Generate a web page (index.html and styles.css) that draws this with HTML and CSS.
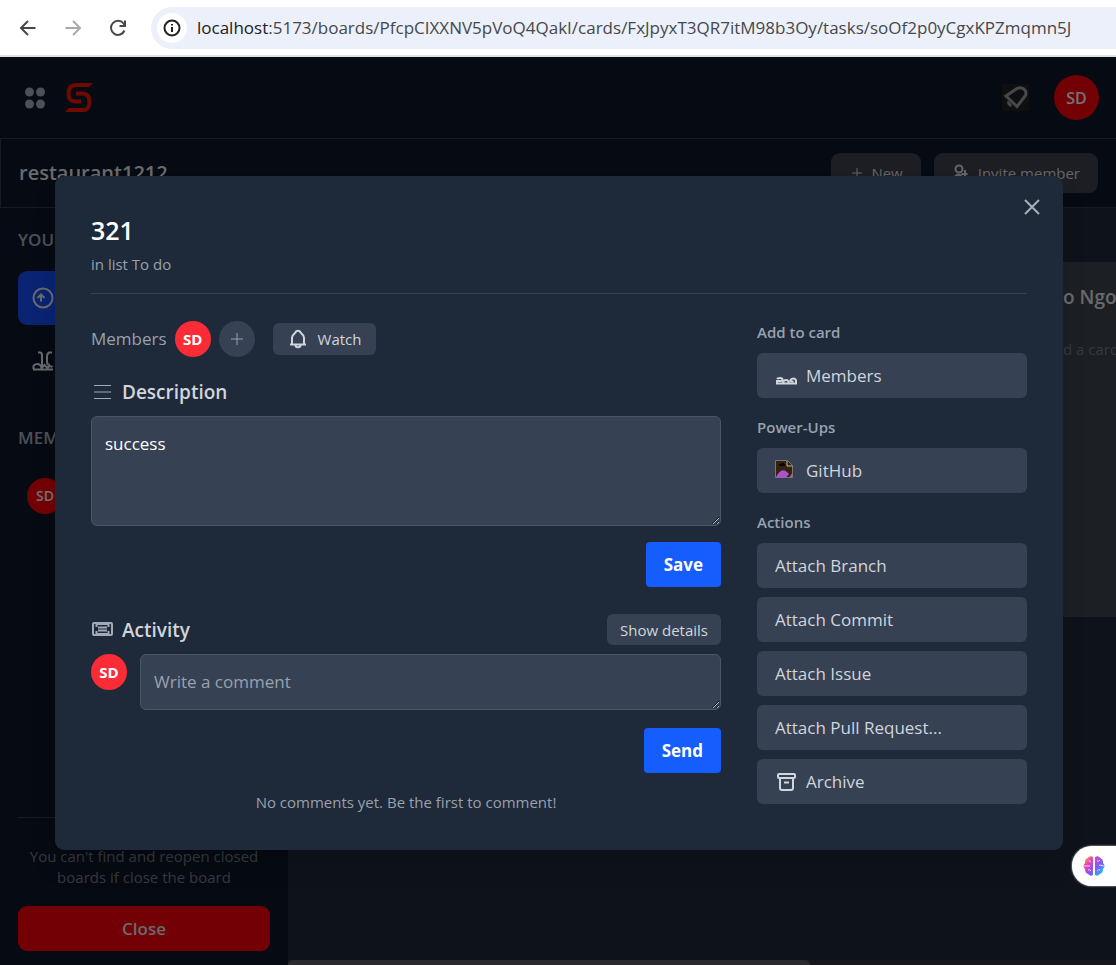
FILE: index.html
```html
<!DOCTYPE html>
<html lang="en">
<head>
<meta charset="utf-8">
<title>restaurant1212</title>
<link rel="stylesheet" href="styles.css">
</head>
<body>
<div class="browser">
  <button class="nav" aria-label="Back"><svg width="24" height="24" viewBox="0 0 24 24"><path d="M19.500 12H5M12 5l-7 7 7 7"/></svg></button>
  <button class="nav off" aria-label="Forward"><svg width="24" height="24" viewBox="0 0 24 24"><path d="M4.500 12H19M12 5l7 7-7 7"/></svg></button>
  <button class="nav" aria-label="Reload"><svg width="24" height="24" viewBox="0 0 24 24"><path d="M18.500 14.500A7 7 0 1 1 17.500 7.500L19 9.500M19 4.500v5.500h-5.500"/></svg></button>
  <div class="address">
    <span class="info"><svg width="24" height="24" viewBox="0 0 24 24"><circle cx="12" cy="12" r="7.500"/><path d="M12 11v5M12 8v1.500"/></svg></span>
    <span class="url"><span class="host">localhost</span>:5173/boards/PfcpCIXXNV5pVoQ4QakI/cards/FxJpyxT3QR7itM98b3Oy/tasks/soOf2p0yCgxKPZmqmn5J</span>
  </div>
</div>
<div class="app">
  <header class="top">
    <svg class="dots" width="20" height="22" viewBox="0 0 20 22"><circle cx="4.500" cy="5" r="4.500"/><circle cx="15.500" cy="5" r="4.500"/><circle cx="4.500" cy="17" r="4.500"/><circle cx="15.500" cy="17" r="4.500"/></svg>
    <svg class="logo" width="28" height="29" viewBox="0 0 28 29"><path d="M28 2H11Q3.500 2 3.500 10.500T11 18.500H16M11 10.500H17.500Q24.500 10.500 24.500 19T17 27H0"/></svg>
    <span class="bell"><svg width="27" height="27" viewBox="0 0 27 27"><path d="M15 4.500C20 2 25.500 6 23.500 11.500L15 22.500 4 12 15 4.500M7 17.500c-1 2 .5 3.500 2.500 4"/></svg></span>
    <span class="avatar big">SD</span>
  </header>
  <div class="boardbar">
    <h1>restaurant1212</h1>
    <button class="dim"><svg width="14" height="14" viewBox="0 0 14 14"><path d="M7 2v10M2 7h10"/></svg>New</button>
    <button class="dim invite"><svg width="16" height="18" viewBox="0 0 16 18"><circle cx="6" cy="5" r="3.500"/><path d="M1.500 16c0-6 5-6 7-4M12 6v8M8.500 10h6"/></svg>Invite member</button>
  </div>
  <div class="main">
    <aside>
      <h3>YOUR</h3>
      <button class="item active" aria-label="Boards"><svg width="22" height="22" viewBox="0 0 22 22"><circle cx="11" cy="11" r="9.500"/><path d="M9 14.500V8M5.500 11 9 7.500 12.500 11"/></svg></button>
      <button class="item" aria-label="Members"><svg width="22" height="22" viewBox="0 0 22 22"><path d="M6 2.500h2q2 0 2 3V16M20 2.500h-3q-2 1-2 4V12q0 3 3 3M1.500 19v-3q1-2 4-2t4 4l3-3 3 3q2-3 5-1M1 19.500h20"/></svg></button>
      <h3 class="second">MEM</h3>
      <span class="avatar side">SD</span>
      <footer><p>You can't find and reopen closed boards if close the board</p><button>Close</button></footer>
    </aside>
    <section class="canvas">
      <article class="column"><h4>o Ngo</h4><p>d a card</p></article>
      <div class="scroll"><div></div></div>
    </section>
  </div>
  <div class="overlay">
    <div class="modal" role="dialog" aria-labelledby="title">
      <button class="x" aria-label="Close card"><svg width="18" height="18" viewBox="0 0 18 18"><path d="M2 2l14 14M16 2 2 16"/></svg></button>
      <div class="head"><h2 id="title">321</h2><p>in list To do</p></div>
      <div class="cols">
        <div class="left">
          <div class="members"><span>Members</span><span class="avatar">SD</span><button class="plus" aria-label="Add member"><svg width="14" height="14" viewBox="0 0 14 14"><path d="M7 1v12M1 7h12"/></svg></button>
            <button class="watch"><svg width="20" height="20" viewBox="0 0 20 20"><path d="M2 15.500h16M4 15V8.500C4 6 6.500 4.500 7.500 3.500 8 1 12 1 12.500 3.500 13.500 4.500 16 6 16 8.500V15M7.500 16c0 3 5 3 5 0"/></svg>Watch</button></div>
          <label class="title" for="desc"><svg width="22" height="18" viewBox="0 0 22 18"><path d="M3 2.500h17M3 9h17M3 15.500h17"/></svg>Description</label>
          <textarea id="desc" class="desc">success</textarea>
          <button class="primary">Save</button>
          <div class="activity"><label class="title" for="comment"><svg width="22" height="18" viewBox="0 0 22 18"><rect x="2" y="2" width="19" height="12" rx="1"/><path d="M5 3h13M5 13h13M7 6.500h9M7 9.500h9M5.500 3v3M17.500 3v3M5.500 10v3M17.500 10v3"/></svg>Activity</label><button class="details">Show details</button></div>
          <div class="write"><span class="avatar">SD</span><textarea id="comment" placeholder="Write a comment"></textarea></div>
          <button class="primary send">Send</button>
          <p class="empty">No comments yet. Be the first to comment!</p>
        </div>
        <div class="right">
          <div class="group"><h5>Add to card</h5><button><svg width="22" height="20" viewBox="0 0 22 20"><path d="M2 17v-2h4q1.500 0 1.500-1.500T5 12t-3 1M1 17.500h20v-3q-.5-2-2.500-2T15.500 14t3 1.500M8 17q.5-3 3-3t3 3"/></svg>Members</button></div>
          <div class="group"><h5>Power-Ups</h5><button><svg class="broken" width="18" height="22" viewBox="0 0 18 22"><path class="paper" d="M.5.5h12l5 5v12H.5z"/><path class="hill" d="M1 17q6-12 13-3l-3 3.500H1z"/><path class="cloud" d="M4 6V4h2V3h3v1h1v2z"/><path class="hill" d="M14 17.500l3-4v4z"/><path class="fold" d="M12 1v5h5.500"/></svg>GitHub</button></div>
          <div class="group"><h5>Actions</h5><button>Attach Branch</button><button>Attach Commit</button><button>Attach Issue</button><button>Attach Pull Request...</button><button><svg width="22" height="20" viewBox="0 0 22 20"><rect x="3" y="2" width="17" height="4" rx="1"/><path d="M5 6v10q0 2 2 2h9q2 0 2-2V6M9 10.500h5"/></svg>Archive</button></div>
        </div>
      </div>
    </div>
  </div>
  <button class="brain" aria-label="Assistant"><svg width="22" height="20" viewBox="0 0 22 20"><defs><linearGradient id="g" x1="0" y1="0" x2="22" y2="20" gradientUnits="userSpaceOnUse"><stop offset=".1" stop-color="#ff9a2e"/><stop offset=".3" stop-color="#e83fc0"/><stop offset=".6" stop-color="#7a5cf5"/><stop offset=".85" stop-color="#22b4ff"/></linearGradient></defs><path fill="url(#g)" d="M10 1Q7-1 4.500 2 1.500 3 2 7q-3 3 0 6 0 4 3 5 2.500 3 5 1zM12 1q3-2 5.500 1 3 1 2.500 5 3 3 0 6 0 4-3 5-2.500 3-5 1z"/><path class="vein" d="M1 10h6M6 4q0 2 2 2M5 14q2-1 3 1M21 10l-5-1M14 5q2 1 3-1M14 15q1-2 3-1"/></svg></button>
</div>
</body>
</html>
```
FILE: styles.css
```css
* { box-sizing: border-box; }
body { margin: 0; height: 100vh; display: flex; flex-direction: column; overflow: hidden; font: 17px/24px "Open Sans", "Noto Sans", sans-serif; color: #d1d5dc; }
h1, h2, h3, h4, h5, p { margin: 0; }
button { font: inherit; color: inherit; border: 0; padding: 0; background: none; display: flex; align-items: center; justify-content: center; }
svg { fill: none; stroke: currentColor; stroke-width: 2; flex: none; }

.browser { flex: none; height: 57px; display: flex; align-items: center; padding-left: 16px; background: #fff; border-bottom: 2px solid #dfe2df; color: #46484a; }
.nav { width: 24px; height: 24px; margin-right: 21px; }
.nav.off { color: #a8aaac; }
.address { flex: 1; height: 42px; display: flex; align-items: center; gap: 10px; padding-left: 6px; border-radius: 21px 0 0 21px; background: #ecf0fa; white-space: nowrap; overflow: hidden; }
.info { width: 30px; height: 30px; display: grid; place-items: center; border-radius: 50%; background: #fff; color: #202124; }
.host { color: #202124; }

.app { flex: 1; min-height: 0; position: relative; display: flex; flex-direction: column; background: #0c1524; }
.top { flex: none; height: 82px; display: flex; align-items: center; padding: 0 17px 0 25px; border-bottom: 1px solid #303640; }
.dots { fill: #99a1af; stroke: none; margin-right: 20px; }
.logo { color: #e11500; stroke-width: 4; clip-path: polygon(0 0, 100% 0, 86% 14%, 100% 14%, 100% 100%, 0 100%, 14% 86%, 0 86%); }
.bell { width: 27px; height: 27px; margin: 0 25px 0 auto; background: #1f1f20; color: #8b919b; }
.bell svg { stroke-width: 3; }
.avatar { flex: none; width: 36px; height: 36px; display: grid; place-items: center; border-radius: 50%; background: #fb2c36; color: #fff; font-size: 15px; font-weight: 700; }
.avatar.big { width: 45px; height: 45px; background: #e7000b; color: #e5e7eb; font-size: 16px; font-weight: 600; }
.boardbar { flex: none; height: 69px; display: flex; align-items: center; gap: 13px; padding: 0 18px; border: solid #303640; border-width: 0 0 1px 1px; }
.boardbar h1 { flex: 1; font-size: 20px; font-weight: 600; }
.dim { height: 40px; gap: 7px; padding: 0 18px 0 19px; border-radius: 9px; background: #383c46; font-size: 15px; color: #c4c8d0; }
.dim svg { stroke-width: 1; }
.invite { gap: 9px; }
.invite svg { stroke-width: 2; }
.main { flex: 1; min-height: 0; display: flex; }
aside { flex: none; width: 288px; display: flex; flex-direction: column; padding: 20px 18px 14px; }
aside h3 { font-size: 17px; font-weight: 600; color: #99a1af; }
.item { height: 54px; justify-content: flex-start; padding-left: 14px; border-radius: 9px; }
.item.active { margin-top: 19px; margin-bottom: 9px; background: #1447e6; }
.second { margin: 38px 0 28px; }
.side { margin-left: 9px; background: #e7000b; color: #e5e7eb; font-size: 14px; font-weight: 600; }
footer { margin-top: auto; padding-top: 28px; border-top: 1px solid #303640; text-align: center; font-size: 15px; line-height: 21px; color: #6a7282; }
footer button { width: 100%; height: 45px; margin-top: 18px; border-radius: 9px; background: #e7000b; color: #d1d5dc; font-size: 17px; font-weight: 600; }
.canvas { flex: 1; display: flex; flex-direction: column; justify-content: space-between; background: #1d2636; }
.column { align-self: flex-end; width: 105px; height: 355px; margin-top: 54px; padding: 23px 0 0 52px; background: #393e49; white-space: nowrap; overflow: hidden; }
.column h4 { font-size: 19px; font-weight: 600; }
.column p { margin-top: 28px; color: #6a7282; font-size: 15px; }
.scroll { height: 5px; background: #2c2d38; }
.scroll div { width: 63%; height: 5px; border-radius: 5px 5px 0 0; background: #52525c; }

.overlay { position: absolute; inset: 0; display: flex; align-items: center; justify-content: center; padding: 4px 0 0 2px; background: rgba(0, 0, 0, .5); }
.modal { position: relative; width: 1008px; max-width: 96%; padding: 36px; border-radius: 9px; background: #1e2939; box-shadow: 0 18px 24px rgba(0, 0, 0, .12); }
.x { position: absolute; top: 22px; right: 22px; color: #a9b0bc; }
.head { padding-bottom: 17px; border-bottom: 1px solid #364153; }
.head h2 { font-size: 25px; line-height: 36px; font-weight: 600; color: #fff; }
.head p { margin-top: 4px; font-size: 15px; color: #99a1af; }
.cols { display: grid; grid-template-columns: minmax(0, 7fr) minmax(0, 3fr); gap: 36px; padding-top: 27px; }
.left { display: flex; flex-direction: column; }
.members { display: flex; align-items: center; gap: 8px; color: #99a1af; }
.plus { width: 36px; height: 36px; border-radius: 50%; background: #364153; }
.plus svg { stroke-width: 1; }
.watch { height: 32px; gap: 10px; margin-left: 10px; padding: 0 14px 0 15px; border-radius: 6px; background: #364153; color: #d1d5dc; font-size: 15px; }
.title { display: flex; align-items: center; gap: 9px; font-size: 19px; font-weight: 600; }
.title svg { color: #a3aab7; }
.members + .title { margin: 23px 0 12px; }
.members + .title svg { stroke-width: 1; }
textarea { display: block; width: 100%; height: 56px; padding: 15px 13px; border: 1px solid #4a5565; border-radius: 6px; outline: 0; background: #364153; color: #fff; color-scheme: dark; font: inherit; resize: vertical; overflow: hidden; }
textarea::placeholder { color: #99a1af; opacity: 1; }
.desc { height: 110px; }
.primary { align-self: flex-end; height: 45px; margin-top: 16px; padding: 0 18px; border-radius: 4px; background: #155dfc; color: #fff; font-weight: 700; }
.activity { display: flex; justify-content: space-between; align-items: center; margin: 27px 0 9px; }
.details { height: 31px; padding: 0 13px; border-radius: 6px; background: #364153; font-size: 15px; }
.write { display: flex; gap: 13px; }
.send { margin-top: 18px; }
.empty { margin-top: 17px; text-align: center; font-size: 15px; color: #99a1af; }
.right { display: flex; flex-direction: column; gap: 18px; }
.group { display: flex; flex-direction: column; gap: 9px; }
.group h5 { font-size: 15px; line-height: 23px; font-weight: 600; color: #99a1af; }
.group button { height: 45px; justify-content: flex-start; gap: 9px; padding: 0 18px; border-radius: 6px; background: #364153; }
.broken { margin-right: 4px; stroke-width: 1; }
.paper { fill: #35220b; stroke: #777; }
.hill { fill: #ad52cf; stroke: none; }
.cloud { fill: #080604; stroke: none; }
.fold { stroke: #bbb; }
.brain { position: absolute; right: 0; top: 789px; width: 44px; height: 40px; border-radius: 20px 0 0 20px; background: #fff; box-shadow: 0 0 2px #fff; }
.brain path { stroke: none; }
.brain .vein { stroke: #f3c9ff; stroke-width: 1; }
```
